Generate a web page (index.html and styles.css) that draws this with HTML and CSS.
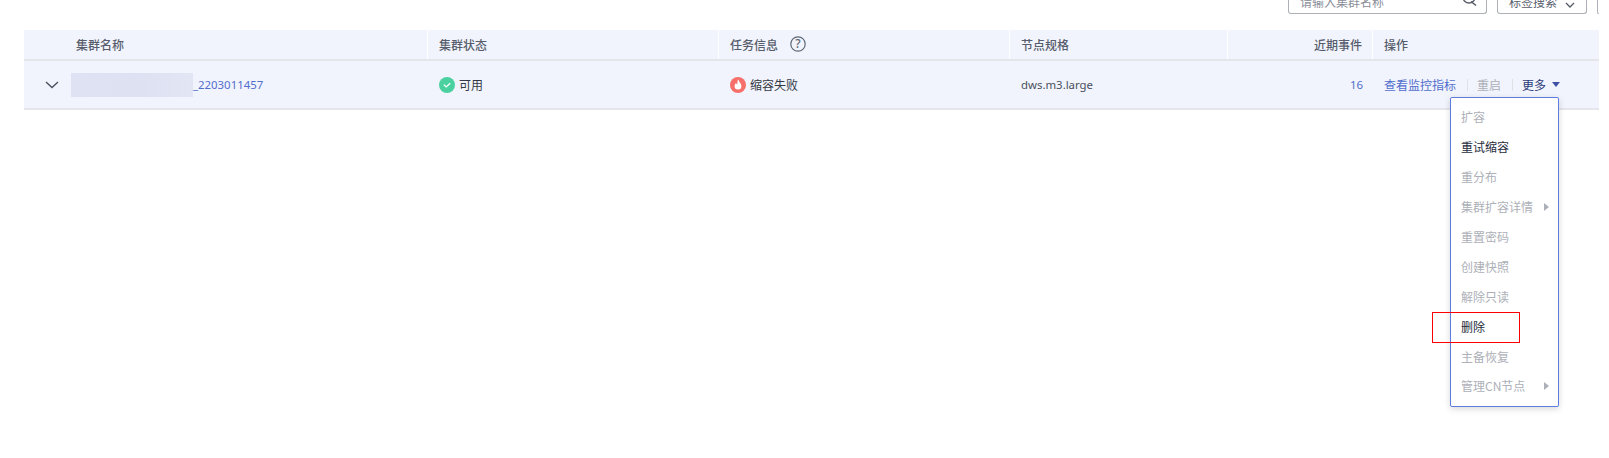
FILE: index.html
```html
<!DOCTYPE html>
<html lang="zh">
<head>
<meta charset="utf-8">
<title>集群管理</title>
<link rel="stylesheet" href="styles.css">
</head>
<body>
<div class="toolbar">
  <div class="search"><span class="search-text">请输入集群名称</span>
    <svg class="search-icon" width="14" height="8" viewBox="0 0 14 8"><circle cx="6" cy="-3" r="6" fill="none" stroke="#555b66" stroke-width="1.4"/><path d="M8 1.500l5 4" stroke="#555b66" stroke-width="1.6" fill="none"/></svg>
  </div>
  <div class="select"><span class="search-text">标签搜索</span>
    <svg class="chev" width="10" height="6" viewBox="0 0 10 6"><path d="M1 1l4 4 4-4" fill="none" stroke="#555b66" stroke-width="1.3"/></svg>
  </div>
  <div class="stub"></div>
</div>
<div class="table">
  <div class="row head">
    <div class="c c-exp"></div>
    <div class="c c-name">集群名称</div>
    <div class="c c-status">集群状态</div>
    <div class="c c-task">任务信息<svg class="help" width="16" height="16" viewBox="0 0 16 16"><circle cx="8" cy="8" r="7.200" fill="none" stroke="#5f6675" stroke-width="1.200"/><text x="8" y="12" text-anchor="middle" class="help-q">?</text></svg></div>
    <div class="c c-spec">节点规格</div>
    <div class="c c-event">近期事件</div>
    <div class="c c-op">操作</div>
  </div>
  <div class="row body">
    <div class="c c-exp"><svg width="14" height="8" viewBox="0 0 14 8"><path d="M1 1l6 5.500L13 1" fill="none" stroke="#4a5160" stroke-width="1.400"/></svg></div>
    <div class="c c-name"><span class="mask"></span><a class="link latin">_2203011457</a></div>
    <div class="c c-status body-text"><svg class="ic" width="16" height="16" viewBox="0 0 16 16"><circle cx="8" cy="8" r="8" fill="#4bd1a0"/><path d="M4.800 7.600l2.400 2.300 4-3.600" fill="none" stroke="#fff" stroke-width="1.300"/></svg>可用</div>
    <div class="c c-task body-text"><svg class="ic" width="16" height="16" viewBox="0 0 16 16"><circle cx="8" cy="8" r="8" fill="#f66f6a"/><path d="M8.400 2.800c.5 2.200 3 3.600 3 6.300A3.400 3.400 0 0 1 8 12.600a3.400 3.400 0 0 1-3.400-3.500c0-1.500.9-2.400 1.500-3.300.2 1 .6 1.500 1.100 1.800.3-1.500.2-3.200.7-4.800z" fill="#fff"/></svg>缩容失败</div>
    <div class="c c-spec latin spec-text">dws.m3.large</div>
    <div class="c c-event"><a class="link latin">16</a></div>
    <div class="c c-op"><a class="link">查看监控指标</a><i class="sep"></i><span class="off">重启</span><i class="sep"></i><span class="more">更多<b class="caret"></b></span></div>
  </div>
  <div class="menu">
    <div class="mi off">扩容</div>
    <div class="mi on">重试缩容</div>
    <div class="mi off">重分布</div>
    <div class="mi off">集群扩容详情<b class="arrow"></b></div>
    <div class="mi off">重置密码</div>
    <div class="mi off">创建快照</div>
    <div class="mi off">解除只读</div>
    <div class="mi on">删除</div>
    <div class="mi off">主备恢复</div>
    <div class="mi off">管理CN节点<b class="arrow"></b></div>
  </div>
  <div class="mark"></div>
</div>
</body>
</html>
```
FILE: styles.css
```css
* { box-sizing: border-box; }
html, body { margin: 0; padding: 0; background: #fff; }
body {
  width: 1609px; height: 458px; overflow: hidden;
  font-family: "Noto Sans CJK SC", "Noto Sans", sans-serif;
  font-size: 12px; color: #252b3a;
}
.toolbar { height: 30px; padding-right: 10px; display: flex; justify-content: flex-end; align-items: flex-start; gap: 10px; overflow: hidden; }
.search, .select, .stub {
  height: 14px; border: 1px solid #adb0b8; border-top: 0; border-radius: 0 0 3px 3px;
  display: flex; align-items: flex-start; justify-content: space-between; overflow: hidden;
}
.search { width: 199px; padding: 0 9px 0 11px; }
.select { width: 90px; padding: 0 11px; }
.stub { width: 2px; border-right: 0; border-radius: 0 0 0 3px; }
.search-text { color: #8a8e99; line-height: 14px; margin-top: -5px; }
.select .search-text { color: #575d6c; }
.chev { margin-top: 2px; flex: none; }
.search-icon { flex: none; }
.table { position: relative; margin: 0 10px 0 24px; }
.row { display: flex; background: #f1f4fc; }
.head { height: 31px; border-bottom: 2px solid #e4e6eb; font-weight: 500; color: #575d6c; }
.body { height: 49px; border-bottom: 2px solid #e4e6eb; color: #252b3a; }
.body-text { color: #333844; }
.c { display: flex; align-items: center; padding-left: 11px; white-space: nowrap; }
.head .c { border-right: 1px solid #fff; padding-bottom: 1px; }
.c-exp { width: 42px; padding-left: 0; justify-content: flex-end; padding-right: 7px; }
.head .c-exp { border-right: 0; padding-right: 0; }
.c-name { width: 362px; padding-left: 5px; }
.head .c-name { padding-left: 10px; }
.c-status { width: 291px; }
.c-task { width: 291px; }
.c-spec { width: 218px; }
.c-event { width: 145px; justify-content: flex-end; padding-right: 10px; padding-left: 0; }
.c-op { flex: 1; padding-left: 11px; }
.head .c-op { border-right: 0; }
.mask {
  display: inline-block; width: 122px; height: 24px;
  background: linear-gradient(90deg, #dee2f3, #dde1f1 55%, #e1e5f4);
}
.latin { font-family: "Noto Sans", sans-serif; font-size: 11.400px; }
.spec-text { color: #4a5060; }
.link { color: #526ecc; }
.ic { margin-right: 4px; flex: none; }
.help { margin-left: 12px; }
.help-q { font-size: 12px; fill: #5f6675; font-family: "Noto Sans", sans-serif; }
.sep { display: inline-block; width: 1px; height: 12px; background: #dfe1e6; margin: 0 9px 0 11px; }
.off { color: #adb0b8; }
.more { color: #2b3a7a; display: inline-flex; align-items: center; }
.caret { width: 0; height: 0; border: 4px solid transparent; border-top: 5px solid #3f51a3; border-bottom: 0; margin-left: 6px; }
.menu {
  position: absolute; left: 1426px; top: 67px; width: 109px; height: 310px;
  background: #fff; border: 1px solid #5e7ce0; border-radius: 2px;
  box-shadow: 0 2px 6px rgba(37,43,58,.18); padding: 4px 0;
  display: flex; flex-direction: column;
}
.mi { height: 29.900px; display: flex; align-items: center; justify-content: flex-start; padding-left: 10px; position: relative; flex: none; }
.mi.on { color: #252b3a; }
.arrow { position: absolute; left: 93px; top: 11px; width: 0; height: 0; border: 4px solid transparent; border-left: 5px solid #adb0b8; border-right: 0; }
.mark { position: absolute; left: 1408px; top: 282px; width: 88px; height: 31px; border: 1px solid #f00; }
```
